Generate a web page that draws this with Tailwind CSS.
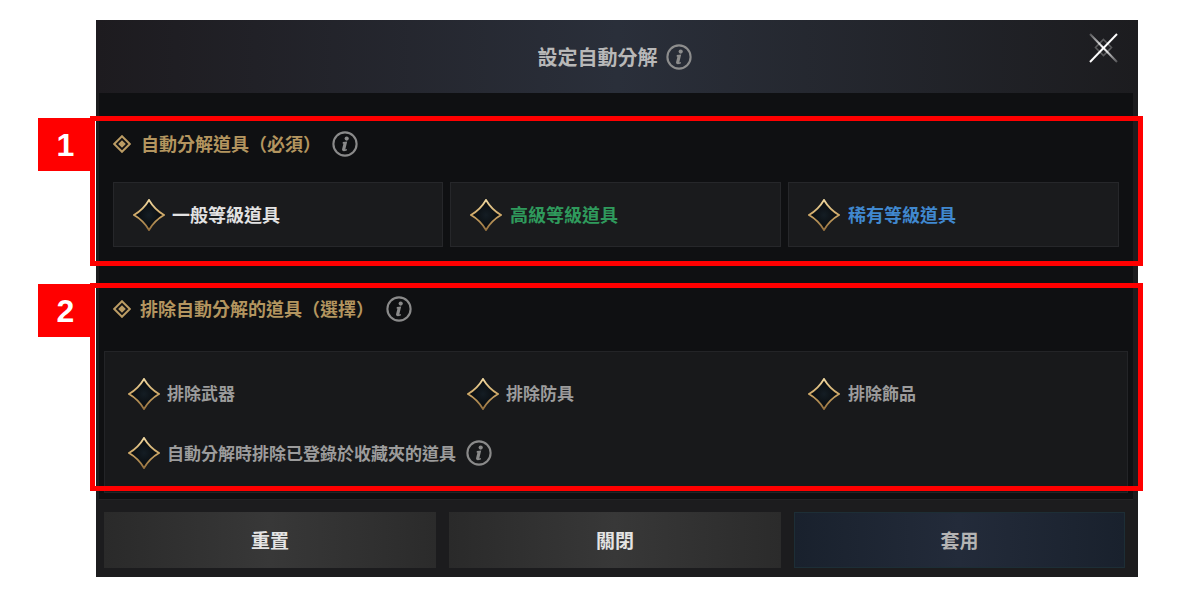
<!DOCTYPE html>
<html lang="zh-Hant">
<head>
    <meta charset="UTF-8">
    <title>設定自動分解</title>
    <script src="https://cdn.jsdelivr.net/npm/@tailwindcss/browser@4"></script>
</head>
<body class="bg-white">
    <svg width="0" height="0" class="absolute">
        <defs>
            <linearGradient id="goldEdge" x1="0" y1="0" x2="0" y2="1">
                <stop offset="0" stop-color="#f0d8a0"/>
                <stop offset="0.5" stop-color="#cfa968"/>
                <stop offset="1" stop-color="#94703e"/>
            </linearGradient>
            <radialGradient id="checkFill">
                <stop offset="0" stop-color="#141d24"/>
                <stop offset="1" stop-color="#07090b"/>
            </radialGradient>
            <linearGradient id="closeA" x1="0" y1="0" x2="1" y2="1">
                <stop offset="0" stop-color="#fff" stop-opacity="0.25"/>
                <stop offset="0.5" stop-color="#fff"/>
                <stop offset="1" stop-color="#fff" stop-opacity="0.25"/>
            </linearGradient>
            <symbol id="check" viewBox="0 0 32 32">
                <path d="M16 1 Q21.5 10.5 31 16 Q21.5 21.5 16 31 Q10.5 21.5 1 16 Q10.5 10.5 16 1Z" fill="url(#checkFill)" stroke="url(#goldEdge)" stroke-width="1.8"/>
            </symbol>
            <symbol id="info" viewBox="0 0 26 26">
                <circle cx="13" cy="13" r="11.6" fill="none" stroke="currentColor" stroke-width="2.1"/>
                <circle cx="14.7" cy="7.6" r="2.1" fill="currentColor"/>
                <path d="M10.8 11 L15.2 10.6 L13.4 18 Q13.3 18.9 15 18 L14.8 19.4 Q10.2 21.4 10 18.6 L11.4 12.8 L10.6 12.4Z" fill="currentColor"/>
            </symbol>
            <symbol id="bullet" viewBox="0 0 18 18">
                <path d="M9 1.2 L16.8 9 L9 16.8 L1.2 9Z" fill="none" stroke="#bb9c64" stroke-width="2"/>
                <path d="M9 5.2 L12.8 9 L9 12.8 L5.2 9Z" fill="#bb9c64"/>
            </symbol>
        </defs>
    </svg>

    <div class="relative w-[1180px] h-[600px] overflow-hidden pt-[20px] pl-[96px] font-['Noto_Sans_CJK_TC','Noto_Sans',sans-serif]">
        <!-- Dialog -->
        <div class="w-[1042px] h-[557px] flex flex-col bg-[#1c1c1e]">
            <!-- Title bar -->
            <header class="relative h-[73px] shrink-0 flex items-center justify-center bg-gradient-to-r from-[#1d1b1f] via-[#2a2f3a] to-[#1c1c1f]">
                <div class="flex items-center gap-[8px] ml-[-5px] pt-[1px]">
                    <h1 class="text-[20px] leading-[28px] font-bold text-[#b8b8b8]">設定自動分解</h1>
                    <svg class="w-[26px] h-[26px] text-[#8d8d8d]"><use href="#info"/></svg>
                </div>
                <button class="absolute left-[993px] top-[13px] w-[30px] h-[30px]">
                    <svg viewBox="0 0 30 30" class="w-[30px] h-[30px]">
                        <path d="M14.5 6.5 L22.5 14.5 L14.5 22.5 L6.5 14.5Z" fill="none" stroke="#5b5b5d" stroke-width="1.6"/>
                        <path d="M1 1 L28 29" stroke="url(#closeA)" stroke-width="2"/>
                        <path d="M28 1 L1 29" stroke="url(#closeA)" stroke-width="2"/>
                    </svg>
                </button>
            </header>

            <!-- Body -->
            <main class="w-[1034px] h-[407px] shrink-0 ml-[3px] px-[5px] bg-[#0f1012] border-b border-[#232325]">
                <!-- Grade section -->
                <section class="px-[9px] pt-[38px]">
                    <div class="flex items-center h-[26px]">
                        <svg class="w-[18px] h-[18px]"><use href="#bullet"/></svg>
                        <h2 class="ml-[10px] mt-[-2px] text-[18px] leading-[26px] font-bold text-[#b3955f]">自動分解道具（必須）</h2>
                        <svg class="ml-[11px] w-[26px] h-[26px] text-[#8a8a8a]"><use href="#info"/></svg>
                    </div>
                    <div class="mt-[25px] grid grid-cols-[330px_331px_331px] gap-[7px]">
                        <div class="h-[65px] flex items-center pl-[19px] bg-[#1a1b1d] border border-[#26272a]">
                            <svg class="w-[32px] h-[32px]"><use href="#check"/></svg>
                            <span class="ml-[7px] text-[18px] font-bold text-[#e2e2e2]">一般等級道具</span>
                        </div>
                        <div class="h-[65px] flex items-center pl-[19px] bg-[#1a1b1d] border border-[#26272a]">
                            <svg class="w-[32px] h-[32px]"><use href="#check"/></svg>
                            <span class="ml-[8px] text-[18px] font-bold text-[#2f9a5c]">高級等級道具</span>
                        </div>
                        <div class="h-[65px] flex items-center pl-[19px] bg-[#1a1b1d] border border-[#26272a]">
                            <svg class="w-[32px] h-[32px]"><use href="#check"/></svg>
                            <span class="ml-[8px] text-[18px] font-bold text-[#4088cf]">稀有等級道具</span>
                        </div>
                    </div>
                </section>

                <!-- Exclusion section -->
                <section class="pt-[49px]">
                    <div class="flex items-center h-[26px] px-[9px]">
                        <svg class="w-[18px] h-[18px]"><use href="#bullet"/></svg>
                        <h2 class="ml-[9px] mt-[-2px] text-[18px] leading-[26px] font-bold text-[#b3955f]">排除自動分解的道具（選擇）</h2>
                        <svg class="ml-[12px] w-[26px] h-[26px] text-[#8a8a8a]"><use href="#info"/></svg>
                    </div>
                    <div class="mt-[29px] h-[142px] pl-[23px] pt-[26px] bg-[#18191b] border border-[#232427] grid grid-cols-[339px_341px_1fr] auto-rows-[32px] gap-y-[27px]">
                        <div class="flex items-center">
                            <svg class="w-[32px] h-[32px]"><use href="#check"/></svg>
                            <span class="ml-[7px] mt-[-2px] text-[17px] font-bold text-[#9c9c9c]">排除武器</span>
                        </div>
                        <div class="flex items-center">
                            <svg class="w-[32px] h-[32px]"><use href="#check"/></svg>
                            <span class="ml-[7px] mt-[-2px] text-[17px] font-bold text-[#9c9c9c]">排除防具</span>
                        </div>
                        <div class="flex items-center">
                            <svg class="w-[32px] h-[32px]"><use href="#check"/></svg>
                            <span class="ml-[8px] mt-[-2px] text-[17px] font-bold text-[#9c9c9c]">排除飾品</span>
                        </div>
                        <div class="col-span-3 flex items-center">
                            <svg class="w-[32px] h-[32px]"><use href="#check"/></svg>
                            <span class="ml-[7px] text-[17px] font-bold text-[#9c9c9c]">自動分解時排除已登錄於收藏夾的道具</span>
                            <svg class="ml-[10px] w-[26px] h-[26px] text-[#8a8a8a]"><use href="#info"/></svg>
                        </div>
                    </div>
                </section>
            </main>

            <!-- Footer buttons -->
            <footer class="flex gap-[13px] pl-[8px] pt-[12px]">
                <button class="w-[332px] h-[56px] text-[19px] font-bold text-[#e4e4e4] bg-gradient-to-r from-[#2a2a2a] via-[#383838] to-[#2b2b2b]">重置</button>
                <button class="w-[332px] h-[56px] text-[19px] font-bold text-[#e4e4e4] bg-gradient-to-r from-[#2a2a2a] via-[#383838] to-[#2b2b2b]">關閉</button>
                <button class="w-[331px] h-[56px] text-[19px] font-bold text-[#b4b4b4] bg-gradient-to-r from-[#19212d] via-[#232b3a] to-[#19212d] border border-[#1d2e36]">套用</button>
            </footer>
        </div>

        <!-- Red annotations -->
        <div class="absolute left-[90px] top-[116px] w-[1053px] h-[150px] border-[5px] border-[#ff0000]"></div>
        <div class="absolute left-[38px] top-[118px] w-[53px] h-[53px] flex items-center justify-center bg-[#ff0000] pl-[2px] text-white text-[32px] font-bold font-['Liberation_Sans',sans-serif]">1</div>
        <div class="absolute left-[90px] top-[283px] w-[1053px] h-[208px] border-[5px] border-[#ff0000]"></div>
        <div class="absolute left-[38px] top-[284px] w-[53px] h-[53px] flex items-center justify-center bg-[#ff0000] pl-[2px] text-white text-[32px] font-bold font-['Liberation_Sans',sans-serif]">2</div>
    </div>
</body>
</html>
